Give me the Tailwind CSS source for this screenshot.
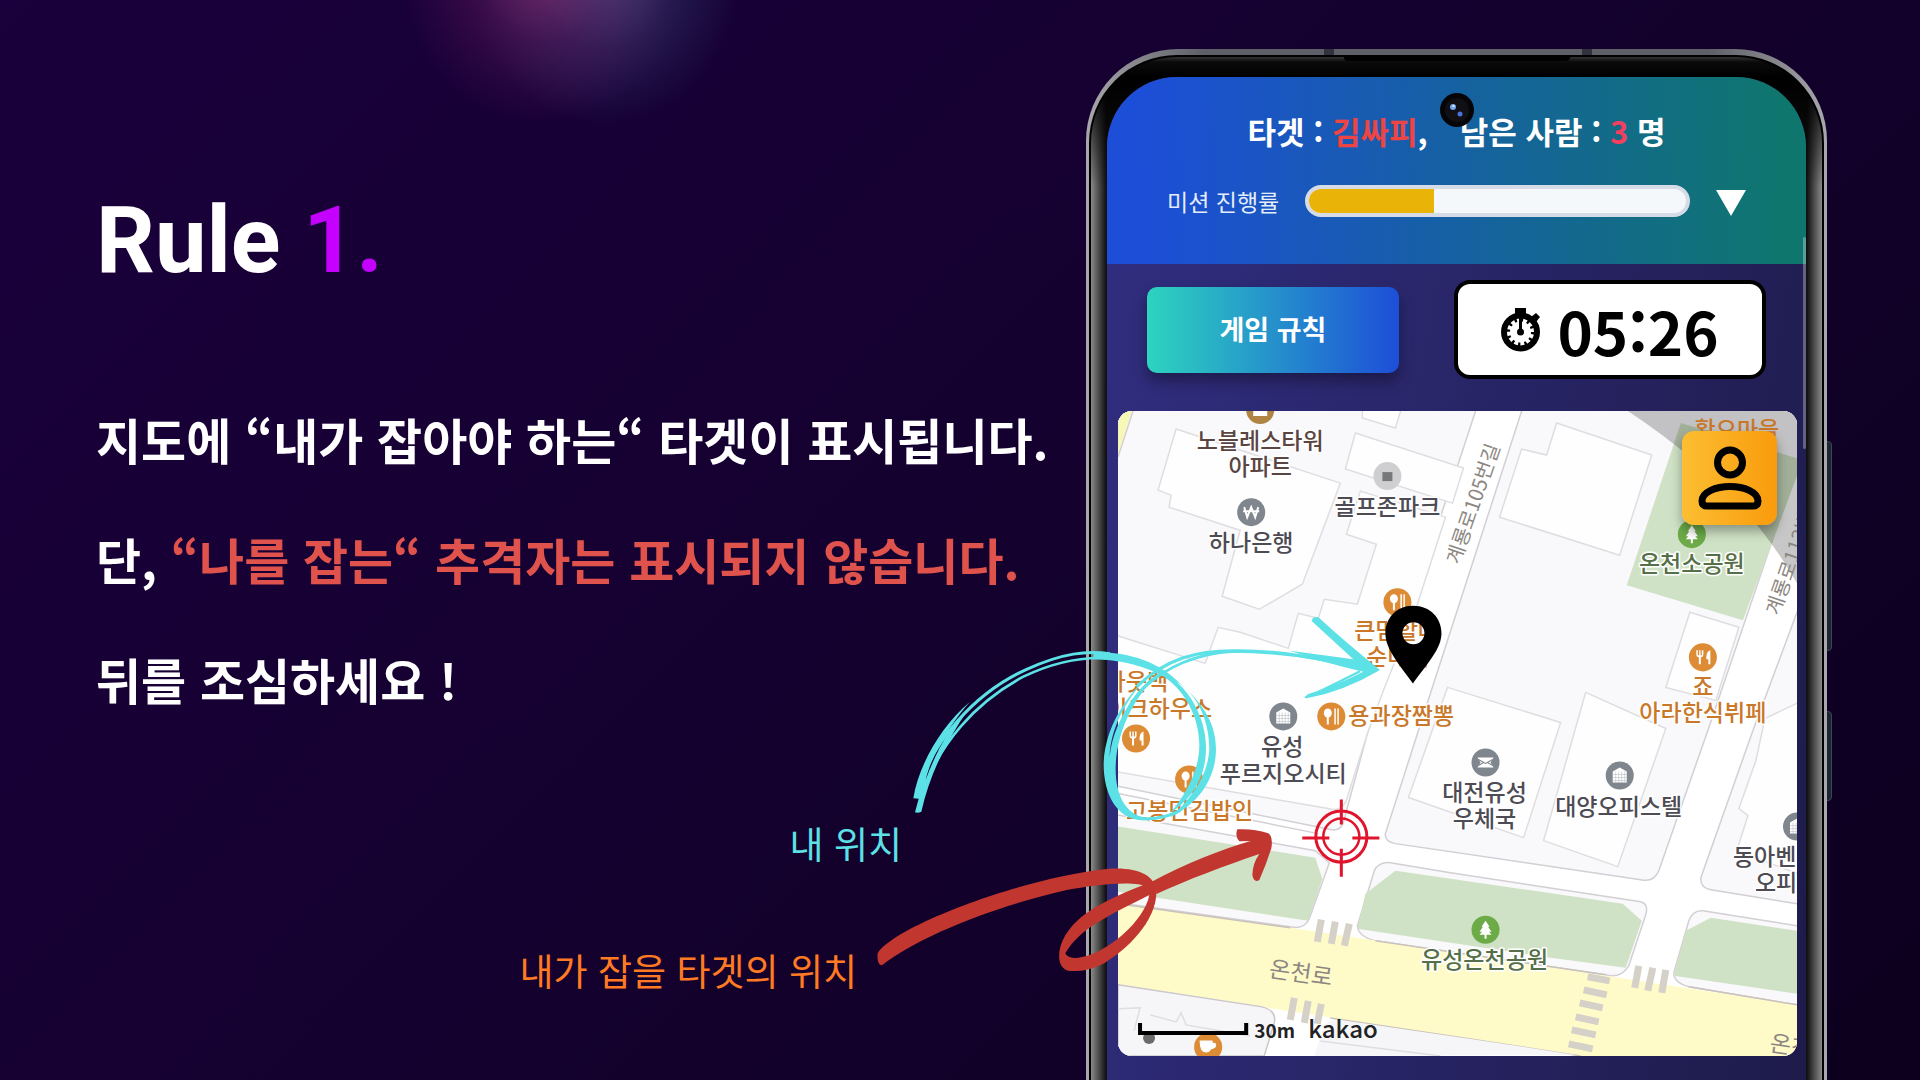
<!DOCTYPE html>
<html lang="ko">
<head>
<meta charset="utf-8">
<meta name="viewport" content="width=device-width, initial-scale=1">
<title>Rule 1.</title>
<script src="https://cdn.jsdelivr.net/npm/@tailwindcss/browser@4"></script>
</head>
<body class="bg-[#12002a] font-['Noto_Sans_CJK_KR',sans-serif]">
<main class="relative flex min-h-screen overflow-hidden bg-[linear-gradient(135deg,#1a003c_0%,#150130_45%,#0c001e_100%)]">
  <!-- glow at the top edge -->
  <div class="absolute -top-44 left-[400px] h-[300px] w-[340px] bg-[radial-gradient(closest-side_at_42%_50%,#8a2a70b3,#6a1a6066_45%,transparent),radial-gradient(closest-side_at_60%_50%,#5a78b099,#3a508055_50%,transparent)]"></div>

  <section class="relative flex min-w-0 flex-1 flex-col pt-[193px] pl-24 font-bold text-white">
    <h1 class="font-['Roboto',sans-serif] text-[92px] leading-[96px] font-bold">Rule <span class="text-[#c400ff]">1.</span></h1>
    <div class="mt-[90px] text-[49px] leading-[120px] whitespace-nowrap">
      <p>지도에 “내가 잡아야 하는“ 타겟이 표시됩니다.</p>
      <p>단, <span class="text-[#e0534d]">“나를 잡는“ 추격자는 표시되지 않습니다.</span></p>
      <p>뒤를 조심하세요 !</p>
    </div>
    <p class="mt-20 mr-[184px] self-end text-[37px] leading-[48px] font-normal text-[#5ce1e6]">내 위치</p>
    <p class="mt-[79px] mr-[229px] self-end text-[37px] leading-[48px] font-normal text-[#ff7a22]">내가 잡을 타겟의 위치</p>
  </section>

  <section class="relative mt-[49px] mr-[93px] flex w-[741px] shrink-0">
    <!-- side keys -->
    <div class="absolute top-[392px] -right-[5px] h-[210px] w-2 rounded-r-sm border border-[#3a4654] bg-[#1c2530]"></div>
    <div class="absolute top-[662px] -right-[5px] h-[90px] w-2 rounded-r-sm border border-[#3a4654] bg-[#1c2530]"></div>
    <!-- metal rim -->
    <div class="relative flex w-full rounded-t-[92px] bg-[linear-gradient(to_right,#a8a8ae_0%,#8a8a90_6%,#5f5f68_16%,#5f5f68_84%,#8a8a90_94%,#a8a8ae_100%)] px-[3px] pt-[6px]">
      <div class="absolute top-0 left-[238px] h-[6px] w-[10px] bg-[#30333d]"></div>
      <div class="absolute top-0 right-[235px] h-[6px] w-[10px] bg-[#30333d]"></div>
      <div class="flex w-full rounded-t-[88px] bg-black px-[2px] pt-[2px]">
        <div class="relative flex w-full rounded-t-[86px] bg-[linear-gradient(to_bottom,#333_0px,#0a0a0a_5px,#000_20px,transparent_130px),linear-gradient(to_right,#8a8a8a_0px,#4a4a4a_8px,#111_15px,#111_calc(100%-15px),#4a4a4a_calc(100%-8px),#8a8a8a_100%)] px-4 pt-5">
          <div class="absolute top-0 left-1/2 h-1 w-[226px] -translate-x-1/2 rounded-b-sm bg-black"></div>

          <div class="relative w-full overflow-hidden rounded-t-[70px] bg-[linear-gradient(100deg,#312e81,#1e1b4b)]">
            <header class="bg-[linear-gradient(88deg,#1d4ed8_5%,#1660a4_48%,#0f766e_96%)] px-[60px] pt-[34px] pb-[47px] text-white">
              <div class="flex justify-center gap-8 text-[31px] leading-10 font-bold whitespace-nowrap [font-feature-settings:'calt'_0]">
                <span>타겟 : <span class="text-[#ef4444]">김싸피</span>,</span>
                <span>남은 사람 : <span class="text-[#f43f5e]">3</span> 명</span>
              </div>
              <div class="mt-[34px] flex items-center gap-[26px]">
                <span class="text-[23px] leading-8 whitespace-nowrap text-[#e4edfa]">미션 진행률</span>
                <div role="progressbar" aria-label="미션 진행률" aria-valuenow="33" class="h-8 flex-1 overflow-hidden rounded-full border-4 border-[#d6dbe8] bg-[#f5f8fb]">
                  <div class="h-full bg-[#eab308]" style="width:33%"></div>
                </div>
                <button aria-label="펼치기" class="mt-1"><svg class="h-[26px] w-[30px]" viewBox="0 0 30 26"><path d="M0 0H30L15 26Z" fill="#fff"/></svg></button>
              </div>
            </header>
            <!-- front camera -->
            <svg class="absolute top-4 left-1/2 h-[34px] w-[34px] -translate-x-1/2" viewBox="0 0 34 34"><circle cx="17" cy="17" r="17" fill="#050507"/><circle cx="17" cy="17" r="12" fill="#101014"/><circle cx="13" cy="14" r="3" fill="#6fa3ea"/><circle cx="20" cy="21" r="2.5" fill="#4a72d8"/><circle cx="13.500" cy="13" r="1.200" fill="#d8ecff"/></svg>
            <div class="absolute top-[160px] right-0 h-[212px] w-[3px] rounded bg-white/30"></div>

            <div class="flex items-center justify-between px-10 pt-4">
              <button class="h-[86px] w-[252px] rounded-[10px] bg-[linear-gradient(to_right,#2dd4bf,#1d4ed8)] text-[27px] font-bold text-white shadow-[0_8px_14px_rgba(0,0,0,0.35)]">게임 규칙</button>
              <div class="flex h-[99px] w-[312px] items-center justify-center gap-4 rounded-2xl border-4 border-black bg-white text-black">
                <svg class="h-11 w-10" viewBox="0 0 40 44"><path d="M14 0H25V7H14Z"/><path d="M30 9L35 5L39 9L35 14Z"/><circle cx="19.500" cy="24" r="16.500" fill="#fff" stroke="#000" stroke-width="6"/><circle cx="19.500" cy="24" r="12.500" fill="none" stroke="#000" stroke-width="4" stroke-dasharray="2.400 4.145"/><path d="M18 10H21V24H18Z"/><circle cx="19.500" cy="24" r="3.500"/></svg>
                <time class="text-[60px] leading-[80px] font-bold [font-feature-settings:'calt'_0]">05:26</time>
              </div>
            </div>

            <div class="relative mt-8 mr-[9px] ml-[11px] overflow-hidden rounded-[14px] bg-white">
              <svg class="block w-full font-['Noto_Sans_CJK_KR',sans-serif]" viewBox="1118 411 678 644">
                <defs>
                  <g id="food"><circle r="14" fill="#dd8b35"/><path d="M-6.500-7V-3Q-6.500 0-4 0V7H-2V0Q.5 0 .5-3V-7H-1V-2H-2.300V-7H-3.700V-2H-5V-7ZM7.500-7Q3-6 3.500 2H5.500V7H7.500Z" fill="#fff"/></g>
                  <g id="spoon"><circle r="14" fill="#dd8b35"/><ellipse cx="-3.500" cy="-3.500" rx="4" ry="4.500" fill="#fff"/><path d="M-4.500 0H-2.500V8H-4.500ZM3-8H4.500V8H3ZM6-8H7.500V8H6Z" fill="#fff"/></g>
                  <g id="bldg"><circle r="14" fill="#7f868e"/><path d="M0-8L7-4V7H-7V-4Z" fill="#fff"/><path d="M-7-1H7M-7 2H7M-7 5H7M-4-4V7M-1-4V7M2-4V7M5-4V7" stroke="#b9bdc2" stroke-width=".6"/></g>
                  <g id="tree"><circle r="14" fill="#6cab48"/><path d="M0-9L4-3H2.500L6 2H3.500L6 5H1V9H-1V5H-6L-3.500 2H-6L-2.500-3H-4Z" fill="#fff"/></g>
                </defs>
                <rect x="1118" y="411" width="678" height="644" fill="#fff"/>
                <!-- city blocks -->
                <g fill="#f9f8fa" stroke="#d3cfd4" stroke-width="1.500">
                  <path d="M1110 405H1477L1458 463L1367 733L1343 822Q1340 831 1330 829L1110 784Z"/>
                  <path d="M1523 405L1418 730L1385 833Q1384 841 1395 843L1640 879Q1653 882 1658 870L1707 730L1802 450V405Z"/>
                  <path d="M1802 596L1752 730L1700 877Q1699 887 1710 889L1802 904Z"/>
                  <path d="M1110 813L1315 850L1329 862L1309 918Q1304 929 1290 926L1110 901Z"/>
                  <path d="M1357 925L1374 870Q1378 861 1390 862L1450 872L1640 901Q1648 903 1645 914L1628 965Q1620 978 1605 974L1375 940Q1358 936 1357 925Z"/>
                  <path d="M1673 972L1688 920Q1692 909 1702 910L1802 926V1005L1688 986Q1673 982 1673 972Z"/>
                </g>
                <!-- buildings -->
                <g fill="#fefefe" stroke="#dfdde1" stroke-width="1.500">
                  <path d="M1176 429L1340 483L1302 584L1259 609L1222 596L1240 530L1169 507L1171 495L1158 490Z"/>
                  <path d="M1355 433L1463 468L1452 503L1345 469Z"/>
                  <path d="M1360 491L1445 517L1415 610L1383 690L1367 733L1346 800Q1340 812 1328 808L1110 770V633L1205 663L1218 627L1240 632L1288 648L1298 613L1318 618L1324 599L1357 604L1376 544L1346 534Z"/>
                  <path d="M1362 405V418L1395 428L1402 405Z"/>
                  <path d="M1556 423L1651 455L1619 555L1499 517L1521 449L1546 455Z"/>
                  <path d="M1689 612L1738 627L1715 700L1665 687Z"/>
                  <path d="M1447 687L1560 722L1523 837L1408 797Z"/>
                  <path d="M1585 692L1665 728L1617 866L1543 840Z"/>
                  <path d="M1802 700L1764 718L1755 760L1738 808L1747 815L1736 850L1802 875Z"/>
                </g>
                <path d="M1118 411H1132L1118 455Z" fill="#f7f7b8"/>
                <path d="M1133 411L1118 457M1118 793L1318 833" stroke="#d3cfd4" stroke-width="1.500" fill="none"/>
                <!-- parks -->
                <g fill="#d0e2c5">
                  <path d="M1680 423L1802 460L1742 620L1626 585Z"/>
                  <path d="M1118 826L1315 857L1322 878L1308 920L1118 891Z"/>
                  <path d="M1365 893L1395 870L1450 878L1622 903L1641 920L1625 967L1550 957L1357 928Z"/>
                  <path d="M1685 930L1710 917L1796 930V993L1673 975Z"/>
                </g>
                <!-- main road -->
                <path d="M1118 903L1290 927L1450 951L1605 975L1796 1004V1055H1580L1470 1038L1267 1007L1118 984Z" fill="#fffbc9"/>
                <path d="M1118 903L1290 927M1375 940L1605 974M1688 986L1796 1004M1330 1017L1470 1038L1580 1055" stroke="#c9c2bb" stroke-width="1.500" fill="none"/>
                <path d="M1118 984L1262 1006Q1277 1010 1274 1022L1264 1055H1118Z" fill="#f6f5f8" stroke="#cbc7cc" stroke-width="1.500"/>
                <path d="M1314 1055L1323 1027Q1328 1018 1340 1019L1470 1038L1575 1054" fill="#f6f5f8"/>
                <path d="M1118 1008L1140 1007L1134 1030M1150 1014L1176 1021L1181 1012L1186 1024L1250 1035M1320 1040L1440 1055" stroke="#dfdde1" stroke-width="1.500" fill="none"/>
                <g stroke="#d5d1c8" stroke-width="7">
                  <path d="M1321 919L1317 941M1335 921L1331 943M1349 923L1344 945M1294 997L1290 1019M1308 1000L1304 1022M1321 1003L1317 1023M1638 965L1634 987M1652 967L1647 990M1665 969L1661 992"/>
                  <path d="M1587 976L1609 980M1583 989L1606 994M1579 1002L1602 1007M1575 1016L1598 1021M1571 1029L1595 1034M1568 1043L1592 1048"/>
                </g>
                <path d="M1627 411Q1740 485 1796 583V411Z" fill="#000" fill-opacity=".22"/>

                <!-- place icons -->
                <g transform="translate(1260 410)"><circle r="14" fill="#b08442"/><path d="M-7-2H7V6H-7Z" fill="#fff"/></g>
                <circle cx="1387" cy="476" r="14" fill="#cfcfd2"/><rect x="1382" y="472" width="10" height="9" fill="#77787a"/>
                <g transform="translate(1251 512)"><circle r="14" fill="#7f868e"/><path d="M-7-5L-4 5L0-5L4 5L7-5M-8-1H8" fill="none" stroke="#fff" stroke-width="2"/></g>
                <use href="#spoon" x="1397" y="602"/>
                <use href="#food" x="1136" y="738"/>
                <use href="#spoon" x="1189" y="779"/>
                <use href="#spoon" x="1331" y="716"/>
                <use href="#bldg" x="1283" y="716"/>
                <use href="#food" x="1702" y="657"/>
                <use href="#tree" x="1691" y="534"/>
                <use href="#tree" x="1485" y="929"/>
                <use href="#bldg" x="1619" y="775"/>
                <use href="#bldg" x="1796" y="826"/>
                <g transform="translate(1485 762)"><circle r="14" fill="#7f868e"/><path d="M-8-5H8L5 0L8 5H-8L-5 0Z" fill="#fff"/><path d="M-7-3L0 1L7-3M-7 3L-2 0M7 3L2 0" stroke="#7f868e" fill="none"/></g>
                <circle cx="1149" cy="1037" r="6" fill="#6b6b6b"/>
                <g transform="translate(1208 1046)"><circle r="14" fill="#dd8b35"/><path d="M-8-6H4Q4 5-2 5Q-8 5-8-6ZM4-4Q9-4 7 0Q5 2 2 2" fill="#fff" stroke="#fff"/></g>

                <!-- place names -->
                <g font-size="23" font-weight="500" stroke="#fff" stroke-width="3" stroke-linejoin="round" paint-order="stroke">
                  <g fill="#4d4b53" text-anchor="middle">
                    <text x="1260" y="449" fill="#5a4543">노블레스타워</text><text x="1260" y="475" fill="#5a4543">아파트</text>
                    <text x="1251" y="551">하나은행</text>
                    <text x="1387" y="515">골프존파크</text>
                    <text x="1282" y="755">유성</text><text x="1283" y="781">푸르지오시티</text>
                    <text x="1484" y="800">대전유성</text><text x="1484" y="826">우체국</text>
                    <text x="1618" y="814">대양오피스텔</text>
                  </g>
                  <g fill="#4d4b53"><text x="1732" y="864">동아벤처</text><text x="1754" y="890">오피스</text></g>
                  <g fill="#c9782a">
                    <text x="1354" y="639">큰맘할매</text><text x="1366" y="665">순대국</text>
                    <text x="1168" y="690" text-anchor="end">아웃백</text><text x="1212" y="717" text-anchor="end">스테이크하우스</text>
                    <text x="1348" y="724">용과장짬뽕</text>
                    <text x="1702" y="695" text-anchor="middle">죠</text><text x="1702" y="721" text-anchor="middle">아라한식뷔페</text>
                    <text x="1126" y="818">고봉민김밥인</text>
                    <text x="1736" y="438" text-anchor="middle" stroke="none">황오마을</text>
                  </g>
                  <g fill="#557048" text-anchor="middle"><text x="1691" y="572">온천소공원</text><text x="1484" y="967">유성온천공원</text></g>
                </g>
                <g fill="#8d8782" font-size="22">
                  <text transform="translate(1268 976) rotate(8)" font-size="23">온천로</text>
                  <text transform="translate(1768 1050) rotate(8)" font-size="23">온천로</text>
                  <text transform="translate(1459 565) rotate(-71)" font-size="20">계룡로105번길</text>
                  <text transform="translate(1778 616) rotate(-71)" font-size="20">계룡로113번길</text>
                </g>

                <!-- scale bar -->
                <path d="M1140 1022V1032H1246V1022" fill="none" stroke="#000" stroke-width="4"/>
                <text x="1254" y="1037" font-size="19" font-weight="700" fill="#222">30m</text>
                <text x="1308" y="1037" font-size="24" font-weight="500" fill="#222">kakao</text>

                <!-- own position and target -->
                <path fill-rule="evenodd" d="M1412.500 605.500C1430 605.500 1441 618 1441 633C1441 648 1428 662 1412.500 683C1397 662 1385 648 1385 633C1385 618 1396 605.500 1412.500 605.500ZM1413 622A11 11 0 1 0 1413 644A11 11 0 1 0 1413 622Z"/>
                <g fill="none" stroke="#e0142c" stroke-width="3"><circle cx="1341" cy="836" r="25.500"/><circle cx="1341" cy="836" r="18" stroke-width="2.500"/><path d="M1341 799V824M1341 848V876M1302 837.500H1329M1352 837.500H1379"/></g>
              </svg>
              <button aria-label="내 정보" class="absolute top-5 right-5 flex h-[94px] w-[95px] items-center justify-center rounded-xl bg-[linear-gradient(to_right,#fcbe32,#f99b0c)] shadow-[0_6px_12px_rgba(0,0,0,0.35)]">
                <svg class="h-16 w-16" viewBox="0 0 64 64" fill="none" stroke="#000" stroke-width="7"><circle cx="32" cy="16.500" r="12.500"/><path d="M4 55C4 46 18 40.500 32 40.500S60 46 60 55Q60 60 55 60H9Q4 60 4 55Z"/></svg>
              </button>
            </div>
          </div>
        </div>
      </div>
    </div>

    <!-- hand-drawn arrows from the notes to the map -->
    <svg class="pointer-events-none absolute top-[551px] -left-[226px] h-[380px] w-[560px]" viewBox="860 600 560 380" aria-hidden="true">
      <g transform="translate(860 620) scale(.33333)">
        <g fill="none" stroke="#5ce1e6" stroke-linejoin="round">
          <path stroke-width="9" d="M180 500C215 370 340 220 500 148C610 98 680 92 750 101"/>
          <path stroke-width="8" d="M195 500C240 375 340 250 490 170C590 122 680 110 750 115"/>
          <path fill="#5ce1e6" stroke="none" d="M160 535C175 440 240 320 330 245C280 300 215 400 197 480C230 390 270 320 330 262C260 360 210 460 184 575Q175 580 165 577L176 536Z"/>
          <path fill="#5ce1e6" stroke="none" d="M700 96C820 96 900 130 960 190C1040 260 1068 320 1068 390C1066 490 1000 560 930 592C990 540 1045 470 1048 385C1048 300 1010 220 950 185C1010 240 1040 320 1038 390C1036 480 990 540 930 580C980 520 1018 450 1018 375C1018 280 960 180 870 150C800 125 760 120 700 118Z"/>
          <path stroke-width="9" d="M960 572C920 592 880 598 850 596C810 590 790 575 775 555"/>
          <path fill="#5ce1e6" stroke="none" d="M900 138C830 190 735 300 731 430C730 520 770 600 850 601L850 593C800 580 765 530 767 440C770 330 830 210 915 150Q860 175 815 240C780 295 755 350 749 410C750 320 810 210 900 138Z"/>
          <path stroke-width="9" d="M830 200C920 115 1010 92 1120 92C1260 90 1380 115 1520 150"/>
          <path stroke-width="8" d="M850 205C930 130 1020 100 1120 94C1260 96 1400 115 1530 152"/>
          <path fill="#5ce1e6" stroke="none" d="M1290 92L1480 118L1355 3Q1358-12 1375-8Q1460 70 1560 150Q1450 215 1340 235Q1325 235 1345 222Q1420 200 1510 155Q1400 130 1290 92Z"/>
          <path stroke-width="7" d="M1350 228Q1430 190 1500 154"/>
        </g>
        <g fill="#c13730" fill-rule="evenodd">
          <path d="M53 1000C100 920 480 775 740 747C830 740 885 765 888 812L862 800C820 780 700 795 620 810C420 855 180 945 66 1036Q50 1036 53 1000Z"/>
          <path d="M889 808C895 900 800 990 735 1028C690 1052 650 1056 625 1052C588 1042 590 985 620 940C665 870 760 830 875 785C980 730 1080 690 1172 663L1138 664Q1124 650 1132 628Q1180 625 1225 640Q1240 650 1234 685Q1220 730 1198 780Q1182 790 1177 765Q1178 730 1198 702C1100 735 980 780 889 822ZM868 825C740 890 660 925 616 1000Q620 1014 650 1014C740 1005 855 900 868 825Z"/>
        </g>
      </g>
    </svg>
  </section>
</main>
</body>
</html>
